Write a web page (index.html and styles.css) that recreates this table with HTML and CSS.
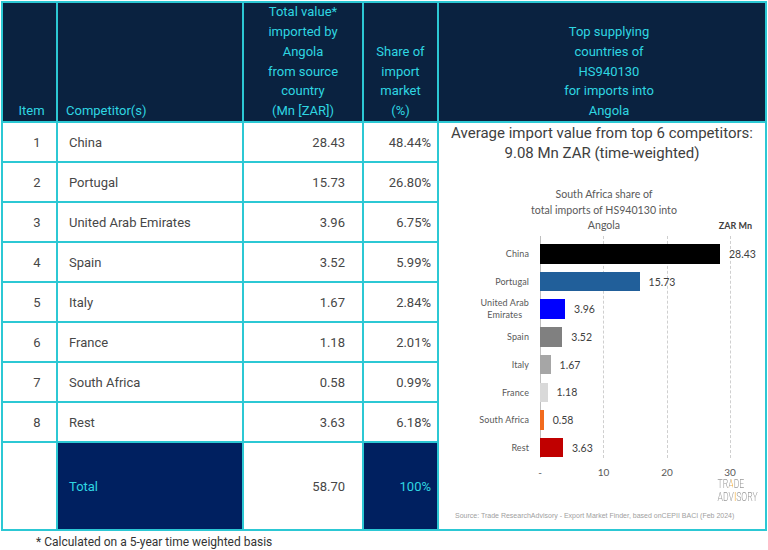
FILE: index.html
```html
<!DOCTYPE html>
<html>
<head>
<meta charset="utf-8">
<link rel="stylesheet" href="styles.css">
</head>
<body>
<div class="page">
  <div class="grid">
    <div class="hcell hitem">Item</div>
    <div class="hcell hcomp">Competitor(s)</div>
    <div class="hcell hcenter">Total value*<br>imported by<br>Angola<br>from source<br>country<br>(Mn [ZAR])</div>
    <div class="hcell hcenter">Share of<br>import<br>market<br>(%)</div>
    <div class="hcell hright">Top supplying<br>countries of<br>HS940130<br>for imports into<br>Angola</div>

    <div class="cell num">1</div><div class="cell name">China</div><div class="cell val">28.43</div><div class="cell pct">48.44%</div>
    <div class="chartcell">
      <div class="ctitle">Average import value from top 6 competitors:<br>9.08 Mn ZAR (time-weighted)</div>
      <div class="csub">South Africa share of<br>total imports of HS940130 into<br>Angola<span class="unit">ZAR Mn</span></div>
      <div class="plot">
        <div class="axisline"></div>
        <div class="gridline g1"></div>
        <div class="gridline g2"></div>
        <div class="gridline g3"></div>
        <div class="brow"><div class="cat">China</div><div class="bar" style="width:180px;background:#000000"></div><div class="bval">28.43</div></div>
        <div class="brow"><div class="cat">Portugal</div><div class="bar" style="width:99.6px;background:#215f9a"></div><div class="bval">15.73</div></div>
        <div class="brow"><div class="cat"><span class="two">United Arab<br>Emirates</span></div><div class="bar" style="width:25.1px;background:#0000ff"></div><div class="bval">3.96</div></div>
        <div class="brow"><div class="cat">Spain</div><div class="bar" style="width:22.3px;background:#808080"></div><div class="bval">3.52</div></div>
        <div class="brow"><div class="cat">Italy</div><div class="bar" style="width:10.6px;background:#a6a6a6"></div><div class="bval">1.67</div></div>
        <div class="brow"><div class="cat">France</div><div class="bar" style="width:7.5px;background:#d9d9d9"></div><div class="bval">1.18</div></div>
        <div class="brow"><div class="cat">South Africa</div><div class="bar" style="width:3.7px;background:#f26b1d"></div><div class="bval">0.58</div></div>
        <div class="brow"><div class="cat">Rest</div><div class="bar" style="width:23px;background:#c00000"></div><div class="bval">3.63</div></div>
      </div>
      <div class="axis">
        <span class="tick t0">-</span>
        <span class="tick t1">10</span>
        <span class="tick t2">20</span>
        <span class="tick t3">30</span>
      </div>
      <div class="logo"><div class="l1">TR<span class="la">A</span>DE</div><div class="l2">ADV<span class="li">I</span>SORY</div></div>
      <div class="source">Source: Trade ResearchAdvisory - Export Market Finder, based onCEPII BACI (Feb 2024)</div>
    </div>

    <div class="cell num">2</div><div class="cell name">Portugal</div><div class="cell val">15.73</div><div class="cell pct">26.80%</div>
    <div class="cell num">3</div><div class="cell name">United Arab Emirates</div><div class="cell val">3.96</div><div class="cell pct">6.75%</div>
    <div class="cell num">4</div><div class="cell name">Spain</div><div class="cell val">3.52</div><div class="cell pct">5.99%</div>
    <div class="cell num">5</div><div class="cell name">Italy</div><div class="cell val">1.67</div><div class="cell pct">2.84%</div>
    <div class="cell num">6</div><div class="cell name">France</div><div class="cell val">1.18</div><div class="cell pct">2.01%</div>
    <div class="cell num">7</div><div class="cell name">South Africa</div><div class="cell val">0.58</div><div class="cell pct">0.99%</div>
    <div class="cell num">8</div><div class="cell name">Rest</div><div class="cell val">3.63</div><div class="cell pct">6.18%</div>

    <div class="cell"></div><div class="cell name total">Total</div><div class="cell val">58.70</div><div class="cell pct total">100%</div>
  </div>
  <div class="foot">* Calculated on a 5-year time weighted basis</div>
</div>
</body>
</html>
```
FILE: styles.css
```css
* { box-sizing: border-box; }
html, body { margin: 0; padding: 0; background: #ffffff; }
body { font-family: Roboto, "Liberation Sans", sans-serif; color: #474747; }
.page { padding: 1px 0 0 1px; width: 768px; height: 550px; }
.grid {
  display: grid;
  grid-template-columns: 53px 184px 118px 73px 326px;
  grid-template-rows: 118px repeat(8, 38px) 86px;
  gap: 2px;
  padding: 2px;
  background: #2cc8d4;
  width: 766px;
}
.hcell {
  background: #0a2240;
  color: #2fd6e2;
  font-size: 13px;
  line-height: 19.8px;
  display: flex;
  flex-direction: column;
  justify-content: flex-end;
}
.hitem { text-align: center; padding-left: 4px; }
.hcomp { padding-left: 8px; }
.hcenter { text-align: center; }
.hright { text-align: center; padding-left: 14px; }
.cell {
  background: #ffffff;
  font-size: 13px;
  display: flex;
  align-items: center;
}
.num { justify-content: center; padding-left: 15px; }
.name { padding-left: 11px; }
.val { justify-content: flex-end; padding-right: 17px; }
.pct { justify-content: flex-end; padding-right: 6px; }
.total { background: #002060; color: #2fd6e2; }
.chartcell {
  grid-column: 5;
  grid-row: 2 / span 9;
  background: #ffffff;
  position: relative;
  display: flex;
  flex-direction: column;
}
.ctitle {
  font-size: 15px;
  line-height: 20px;
  text-align: center;
  color: #404040;
}
.csub {
  position: relative;
  margin-top: 24px;
  font-family: Lato, "Liberation Sans", sans-serif;
  font-size: 10.6px;
  line-height: 15.5px;
  text-align: center;
  color: #595959;
  padding-left: 4px;
}
.unit {
  position: absolute;
  right: 13px;
  bottom: 0;
  font-size: 9px;
  font-weight: bold;
  color: #404040;
}
.plot {
  position: relative;
  margin-top: 2.5px;
  height: 222px;
  padding-top: 4px;
  font-family: Lato, "Liberation Sans", sans-serif;
}
.axisline, .gridline { position: absolute; top: 0; bottom: 0; width: 0; }
.axisline { left: 101px; border-left: 1px solid #bfbfbf; }
.gridline { border-left: 1px dashed #cfcfcf; }
.g1 { left: 164px; }
.g2 { left: 227.5px; }
.g3 { left: 291px; }
.brow {
  position: relative;
  display: flex;
  align-items: center;
  height: 27.7px;
}
.cat {
  width: 101px;
  padding-right: 11px;
  text-align: right;
  font-size: 9px;
  letter-spacing: 0.1px;
  color: #595959;
}
.two { display: inline-block; text-align: center; line-height: 12px; }
.bar { height: 19.5px; }
.bval { margin-left: 9px; font-size: 10.5px; color: #404040; }
.axis {
  position: relative;
  height: 20px;
  margin-top: 4px;
  font-family: Lato, "Liberation Sans", sans-serif;
  font-size: 10px;
  line-height: 20px;
  color: #595959;
}
.tick { position: absolute; top: 0; transform: translateX(-50%); }
.t0 { left: 101px; }
.t1 { left: 164.5px; }
.t2 { left: 228px; }
.t3 { left: 291px; }
.logo {
  position: absolute;
  right: 7px;
  top: 355px;
  font-family: Roboto, sans-serif;
  font-weight: 300;
  color: #9a9a9a;
  font-size: 12px;
  line-height: 13px;
  transform: scaleX(0.72);
  transform-origin: right top;
}
.l1 { padding-right: 13px; }
.la {
  background: linear-gradient(90deg, #9a9a9a 50%, #f5a623 50%);
  -webkit-background-clip: text;
  background-clip: text;
  color: transparent;
}
.li { color: #f5a623; }
.source {
  margin-top: 29px;
  padding-left: 16px;
  font-family: "Liberation Sans", sans-serif;
  font-size: 7px;
  line-height: 10px;
  color: #a0a0a0;
}
.foot {
  padding-left: 35px;
  margin-top: 3px;
  font-size: 12px;
  line-height: 16px;
  color: #333333;
}
```
